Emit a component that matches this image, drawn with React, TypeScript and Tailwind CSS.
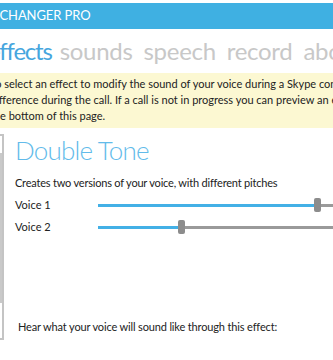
import React from "react";

const font = { fontFamily: "Lato, 'Noto Sans', sans-serif" };

function Slider({ pct }: { pct: number }) {
  return (
    <div className="relative flex-1 h-[14px] flex items-center">
      <div className="w-full h-[3px] bg-[#9a9a9a] flex">
        <div className="h-[3px] bg-[#43b0e6]" style={{ width: `${pct}%` }} />
      </div>
      <div
        className="absolute top-0 w-[7px] h-[14px] rounded-[2px] bg-[#8c8c8c]"
        style={{ left: `calc(${pct}% - 1px)` }}
      />
    </div>
  );
}

export default function App() {
  return (
    <div className="w-[333px] h-[360px] overflow-hidden bg-white relative" style={font}>
      <div className="w-[600px] ml-[-13px]">
        <div className="h-[3px] bg-white" />
        <div className="h-[26px] bg-[#3fb0e2] flex items-center">
          <div className="ml-[-29px] text-white text-[13px] tracking-[-0.1px] whitespace-nowrap">VOICE CHANGER PRO</div>
        </div>
        <div className="h-[44px] flex items-center gap-[11px] text-[24px] tracking-[-0.3px] leading-none ml-[1px] whitespace-nowrap">
          <span className="text-[#46a6de] tracking-[-1.2px] mr-[-3px]">effects</span>
          <span className="text-[#c8c8c8]">sounds</span>
          <span className="text-[#c8c8c8]">speech</span>
          <span className="text-[#c8c8c8]">record</span>
          <span className="text-[#c8c8c8]">about</span>
        </div>
        <div className="bg-[#fcf8d2] h-[55px] pt-[3px] text-[11px] leading-[16px] text-[#222] whitespace-nowrap">
          <div className="ml-[3px]">To select an effect to modify the sound of your voice during a Skype conversation, you will hear the</div>
          <div className="ml-[3px]">difference during the call. If a call is not in progress you can preview an effect at the</div>
          <div className="ml-[3px]">the bottom of this page.</div>
        </div>
        <div className="flex">
          <div className="w-[17px] shrink-0 relative mt-[6px]">
            <div className="h-[206px] border-r-2 border-t-2 border-b-2 border-[#c4c4c4] w-[5px] ml-[12px]" />
            <div className="absolute left-[13px] top-[19px] w-[2px] h-[150px] bg-[#c9c9c9]" />
          </div>
          <div className="flex-1 pl-[11px] w-[320px]">
            <div className="text-[26px] font-light tracking-[-0.8px] text-[#62bbea] leading-[34px] mt-[5px]">Double Tone</div>
            <div className="text-[11px] tracking-[-0.2px] text-[#222] mt-[8px] leading-[16px]">Creates two versions of your voice, with different pitches</div>
            <div className="flex items-center mt-[5px] text-[11px] text-[#222] w-[400px]">
              <div className="w-[83px] leading-[18px]">Voice 1</div>
              <div className="w-[310px] flex"><Slider pct={70} /></div>
            </div>
            <div className="flex items-center mt-[4px] text-[11px] text-[#222] w-[400px]">
              <div className="w-[83px] leading-[18px]">Voice 2</div>
              <div className="w-[310px] flex"><Slider pct={26} /></div>
            </div>
            <div className="text-[11px] tracking-[-0.15px] text-[#222] mt-[83px] ml-[3px]">Hear what your voice will sound like through this effect:</div>
          </div>
        </div>
      </div>
    </div>
  );
}
